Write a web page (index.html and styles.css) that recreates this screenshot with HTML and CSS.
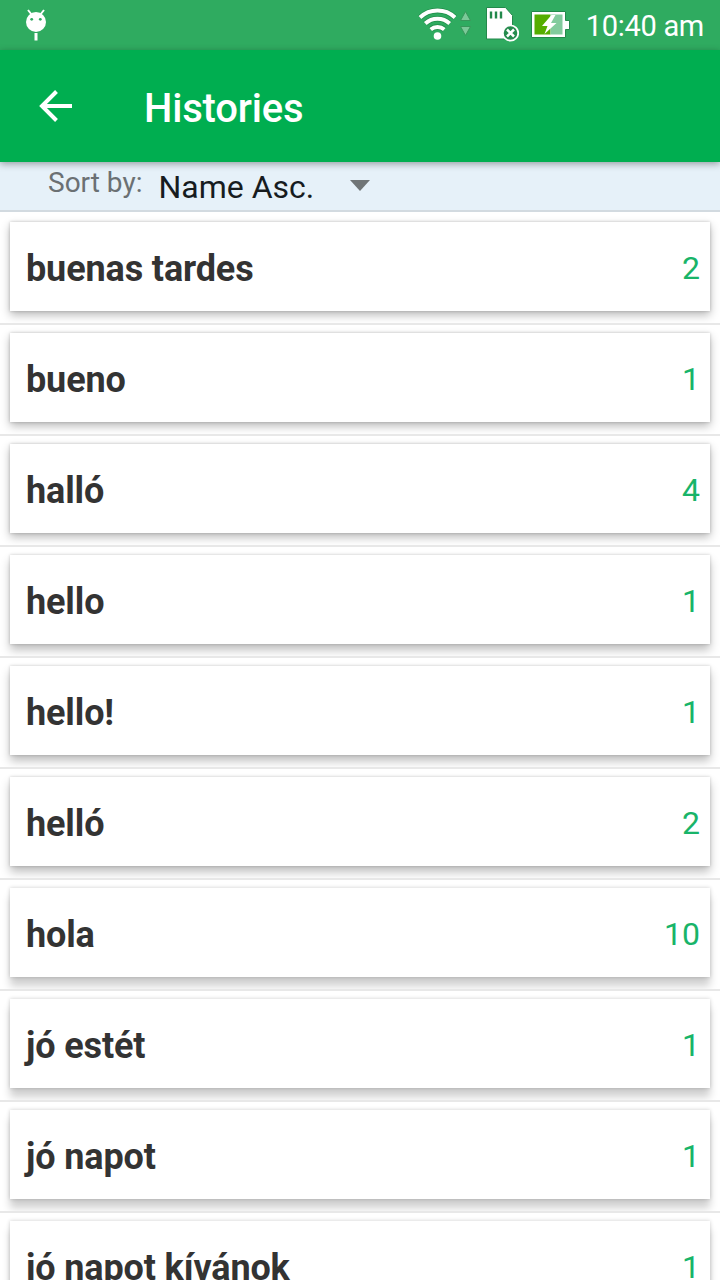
FILE: index.html
```html
<!DOCTYPE html>
<html lang="en">
  <head>
    <meta charset="UTF-8" />
    <meta name="viewport" content="width=device-width, initial-scale=1.0" />
    <title>Histories</title>
    <link rel="stylesheet" href="styles.css">
  </head>
  <body>
    <div class="status-bar">
      <svg class="debug-icon" width="22" height="32" viewBox="0 0 22 32">
        <path d="M3 1l4 5M19 1l-4 5" stroke="#fff" stroke-width="2" />
        <circle cx="11" cy="13" r="10" fill="#fff" />
        <circle cx="6.7" cy="10.3" r="1.4" fill="#2fab60" />
        <circle cx="15.3" cy="10.3" r="1.4" fill="#2fab60" />
        <rect x="9.5" y="24" width="3" height="7.5" fill="#fff" />
      </svg>
      <div class="status-icons">
        <svg class="wifi-icon" width="54" height="36" viewBox="0 0 54 36">
          <g fill="none" stroke="#1f8c48" stroke-width="5.6">
            <path d="M2 12.5a25.500 25.500 0 0 1 35 0" />
            <path d="M7.300 18.500a18 18 0 0 1 24.400 0" />
            <path d="M12.700 24.500a10.400 10.400 0 0 1 13.600 0" />
          </g>
          <g fill="none" stroke="#fff" stroke-width="4">
            <path d="M2 12.500a25.500 25.500 0 0 1 35 0" />
            <path d="M7.300 18.500a18 18 0 0 1 24.400 0" />
            <path d="M12.700 24.500a10.400 10.400 0 0 1 13.600 0" />
          </g>
          <circle cx="19.500" cy="31" r="3.800" fill="#fff" />
          <path d="M47.500 6.500l5 9h-10zM47.500 30.500l-5-9h10z" fill="#7bc998" stroke="#38965a" />
        </svg>
        <svg class="sd-icon" width="34" height="36" viewBox="0 0 34 36">
          <path d="M1.500 1.500h19l7 8v23.500h-26z" fill="#fff" stroke="#23894b" />
          <path d="M6 5.500v7M11 5.500v7M16 5.500v7" stroke="#23894b" stroke-width="2.4" />
          <circle cx="25.500" cy="27" r="7.700" fill="#258b4d" stroke="#fff" stroke-width="1.800" />
          <path d="M22 23.500l7 7M29 23.500l-7 7" stroke="#fff" stroke-width="2.500" />
        </svg>
        <svg class="battery-icon" width="40" height="28" viewBox="0 0 40 28">
          <path d="M.5.5h34v9h4v9h-4v8H.5z" fill="#fff" stroke="#23894b" />
          <rect x="3.500" y="3.500" width="16" height="20" fill="#55ad00" />
          <rect x="19.500" y="3.500" width="12" height="20" fill="#82cb9d" />
          <path d="M20.500 4L11 15h5.500L13.500 23 25.500 12H20L24.500 4z" fill="#fff" />
        </svg>
      </div>
      <span class="clock">10:40 am</span>
    </div>
    <header class="toolbar">
      <svg class="back-icon" width="34" height="34" viewBox="0 0 34 34">
        <path d="M33 17H3M17.500 2.500L3 17l14.500 14.500" fill="none" stroke="#fff" stroke-width="4" />
      </svg>
      <h1>Histories</h1>
    </header>
    <div class="sort-bar">
      <span class="sort-label">Sort by:</span>
      <span class="sort-value">Name Asc.</span>
      <svg class="dropdown-icon" width="20" height="11" viewBox="0 0 20 11">
        <path d="M0 0h20L10 11z" fill="#707577" />
      </svg>
    </div>
    <ul class="history-list">
      <li class="history-item"><div class="card"><span class="word">buenas tardes</span><span class="count">2</span></div></li>
      <li class="history-item"><div class="card"><span class="word">bueno</span><span class="count">1</span></div></li>
      <li class="history-item"><div class="card"><span class="word">halló</span><span class="count">4</span></div></li>
      <li class="history-item"><div class="card"><span class="word">hello</span><span class="count">1</span></div></li>
      <li class="history-item"><div class="card"><span class="word">hello!</span><span class="count">1</span></div></li>
      <li class="history-item"><div class="card"><span class="word">helló</span><span class="count">2</span></div></li>
      <li class="history-item"><div class="card"><span class="word">hola</span><span class="count">10</span></div></li>
      <li class="history-item"><div class="card"><span class="word">jó estét</span><span class="count">1</span></div></li>
      <li class="history-item"><div class="card"><span class="word">jó napot</span><span class="count">1</span></div></li>
      <li class="history-item"><div class="card"><span class="word">jó napot kívánok</span><span class="count">1</span></div></li>
    </ul>
  </body>
</html>
```
FILE: styles.css
```css
* {
  box-sizing: border-box;
}
body {
  margin: 0;
  height: 1280px;
  overflow: hidden;
  display: flex;
  flex-direction: column;
  font-family: Roboto, sans-serif;
  background-color: #fff;
}
svg {
  display: block;
  flex-shrink: 0;
}
.status-bar {
  flex: 0 0 50px;
  display: flex;
  align-items: flex-start;
  padding: 0 16px 0 25px;
  background-color: #2fab60;
  color: #fff;
}
.debug-icon {
  margin-top: 9px;
}
.status-icons {
  display: flex;
  margin-left: auto;
}
.wifi-icon {
  margin-top: 5px;
}
.sd-icon {
  margin: 6px 0 0 13px;
}
.battery-icon {
  margin: 11px 0 0 12px;
}
.clock {
  margin-left: 15px;
  padding-top: 3px;
  font-size: 29px;
  line-height: 47px;
  letter-spacing: -0.3px;
}
.toolbar {
  flex: 0 0 112px;
  display: flex;
  align-items: center;
  padding-left: 39px;
  background-color: #00ae50;
  color: #fff;
  box-shadow: 0 2px 7px rgba(0, 0, 0, 0.35);
  z-index: 1;
}
.toolbar h1 {
  margin: 4px 0 0 71px;
  font-size: 40px;
  font-weight: 500;
  letter-spacing: -0.2px;
}
.sort-bar {
  flex: 0 0 50px;
  display: flex;
  align-items: flex-start;
  padding-left: 48px;
  background-color: #e6f1f9;
  border-bottom: 2px solid #d2dae0;
}
.sort-label {
  margin-top: 4px;
  font-size: 28px;
  line-height: 33px;
  color: #6b7073;
}
.sort-value {
  margin: 6px 0 0 16px;
  font-size: 32px;
  line-height: 38px;
  color: #171c1f;
}
.dropdown-icon {
  margin: 18px 0 0 36px;
}
.history-list {
  list-style-type: none;
  margin: 0;
  padding: 2px 0 0;
}
.history-item {
  height: 111px;
  padding: 8px 10px 12px;
  border-bottom: 2px solid #e8e8e8;
  overflow: hidden;
}
.card {
  height: 89px;
  display: flex;
  align-items: center;
  justify-content: space-between;
  padding: 0 10px 0 16px;
  background-color: #fff;
  box-shadow: 0 4px 9px rgba(0, 0, 0, 0.28), 0 0 3px rgba(0, 0, 0, 0.2);
}
.history-item:nth-child(n + 4) .card {
  box-shadow: 0 6px 9px rgba(0, 0, 0, 0.25), 0 0 3px rgba(0, 0, 0, 0.2);
}
.history-item:nth-child(n + 7) .card {
  box-shadow: 0 9px 8px rgba(0, 0, 0, 0.19), 0 0 4px rgba(0, 0, 0, 0.2);
}
.word {
  padding-top: 4px;
  font-size: 36px;
  font-weight: 700;
  letter-spacing: -0.13px;
  color: #333;
}
.count {
  padding-top: 3px;
  font-size: 32px;
  color: #18b469;
}
```
